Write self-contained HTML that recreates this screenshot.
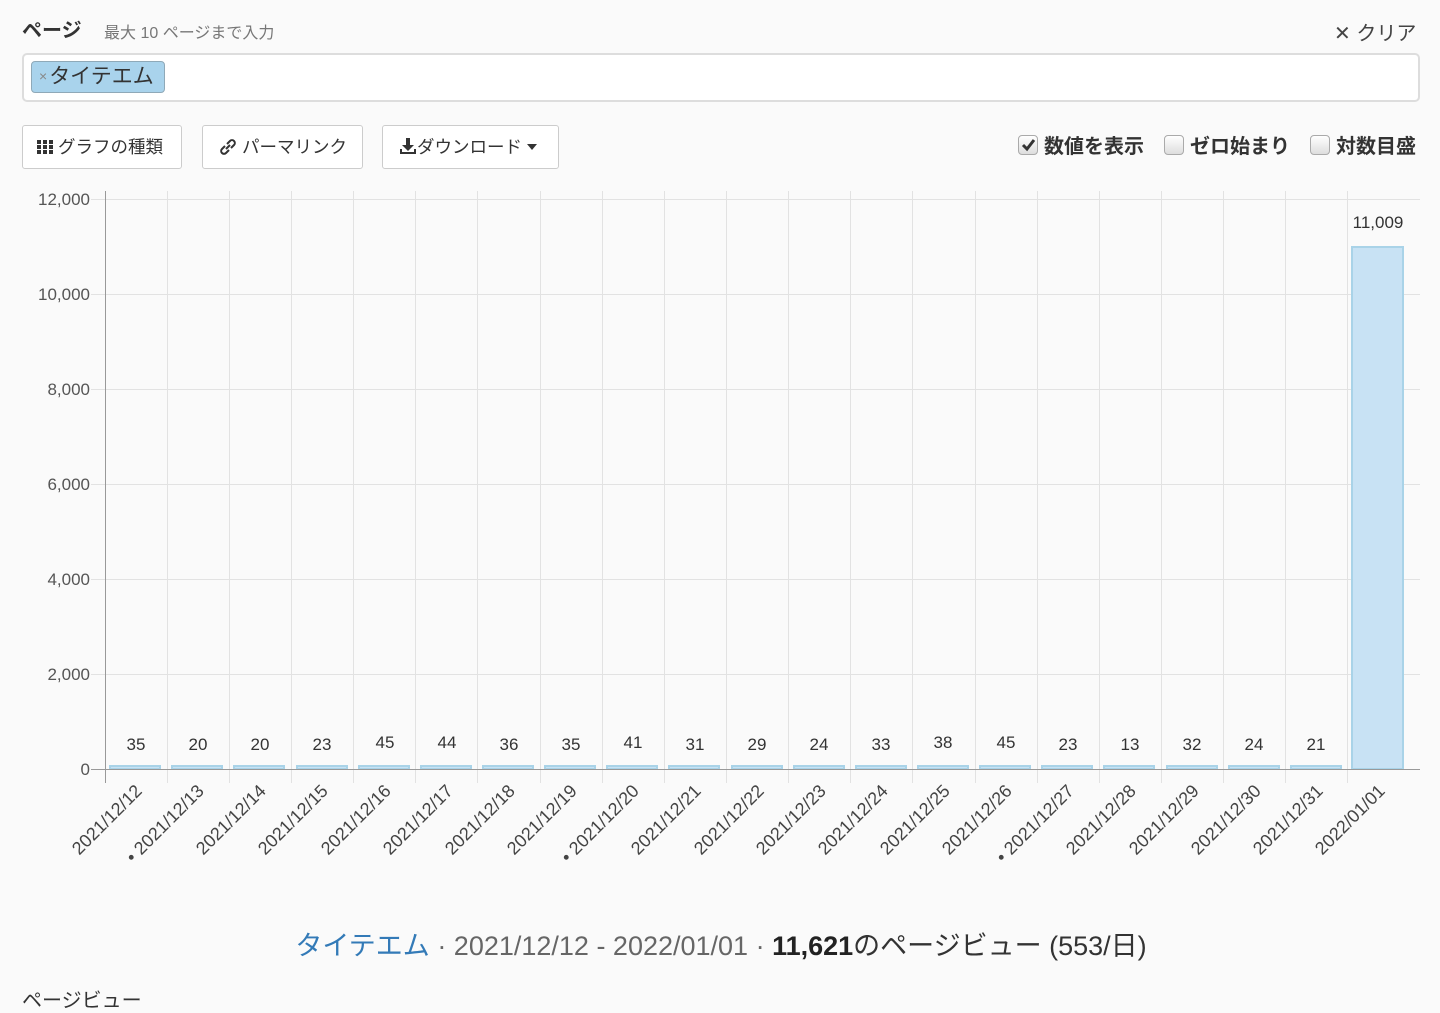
<!DOCTYPE html>
<html><head><meta charset="utf-8">
<style>
*{box-sizing:border-box;margin:0;padding:0}
body{width:1440px;height:1002px;overflow:hidden;background:#fafafa;font-family:"Liberation Sans","Noto Sans CJK JP",sans-serif;color:#333;position:relative}
.abs{position:absolute}
.btn{position:absolute;top:125px;height:44px;border:1px solid #ccc;border-radius:3px;background:#fff;font-size:17.5px;line-height:42px;padding-left:14px;color:#333;white-space:nowrap}
.cb{display:inline-block;width:20px;height:20px;border:1px solid #aaa;border-radius:4px;background:linear-gradient(#fff,#ddd);vertical-align:-2px;margin-right:6px;position:relative}
.chk{position:absolute;top:130px;font-size:20px;font-weight:bold;color:#333;white-space:nowrap}
</style></head><body>
<div class="abs" style="left:22px;top:14px;font-size:20px;font-weight:bold">ページ</div>
<div class="abs" style="left:104px;top:19px;font-size:16px;color:#777">最大 10 ページまで入力</div>
<div class="abs" style="left:1334px;top:17px;font-size:20px;color:#444">✕ クリア</div>
<div class="abs" style="left:22px;top:53px;width:1398px;height:49px;border:2px solid #ddd;border-radius:5px;background:#fff"></div>
<div class="abs" style="left:31px;top:61px;width:134px;height:32px;background:#a9d3ec;border:1px solid #8fa9b8;border-radius:4px;font-size:21px;line-height:29px;padding-left:7px;color:#333;white-space:nowrap"><span style="color:#888;font-size:14px;vertical-align:2px;margin-right:2px">×</span>タイテエム</div>

<div class="btn" style="left:22px;width:160px"><svg width="16" height="16" viewBox="0 0 16 16" style="vertical-align:-2px;margin-right:5px"><g fill="#333"><rect x="0" y="1" width="4" height="4"/><rect x="6" y="1" width="4" height="4"/><rect x="12" y="1" width="4" height="4"/><rect x="0" y="6" width="4" height="4"/><rect x="6" y="6" width="4" height="4"/><rect x="12" y="6" width="4" height="4"/><rect x="0" y="11" width="4" height="4"/><rect x="6" y="11" width="4" height="4"/><rect x="12" y="11" width="4" height="4"/></g></svg>グラフの種類</div>
<div class="btn" style="left:202px;width:161px;padding-left:16px"><svg width="18" height="18" viewBox="0 0 18 18" style="vertical-align:-3px;margin-right:5px"><g fill="none" stroke="#333" stroke-width="2"><path d="M8 6 L11 3 a2.8 2.8 0 0 1 4 4 L12 10"/><path d="M10 12 L7 15 a2.8 2.8 0 0 1 -4 -4 L6 8"/><path d="M7 11 L11 7"/></g></svg>パーマリンク</div>
<div class="btn" style="left:382px;width:177px;padding-left:16px"><svg width="18" height="18" viewBox="0 0 18 18" style="vertical-align:-2px"><g fill="#333"><rect x="7" y="1" width="4" height="7"/><path d="M3 8 H15 L9 14Z"/><path d="M1 12 H3 V15 H15 V12 H17 V17 H1Z"/></g></svg>ダウンロード <span style="display:inline-block;border-left:5px solid transparent;border-right:5px solid transparent;border-top:6px solid #333;vertical-align:3px"></span></div>

<div class="chk" style="left:1018px"><span class="cb"><svg width="18" height="18" viewBox="0 0 18 18" style="position:absolute;left:0;top:0"><path d="M4 9 L8 13 L15 4" fill="none" stroke="#333" stroke-width="3"/></svg></span>数値を表示</div>
<div class="chk" style="left:1164px"><span class="cb"></span>ゼロ始まり</div>
<div class="chk" style="left:1310px"><span class="cb"></span>対数目盛</div>

<svg class="abs" style="left:0;top:0" width="1440" height="900" font-family="Liberation Sans, Noto Sans CJK JP, sans-serif">
<g stroke="#e2e2e2" stroke-width="1">
<line x1="91" y1="199.5" x2="1420" y2="199.5"/><line x1="91" y1="294.5" x2="1420" y2="294.5"/><line x1="91" y1="389.5" x2="1420" y2="389.5"/><line x1="91" y1="484.5" x2="1420" y2="484.5"/><line x1="91" y1="579.5" x2="1420" y2="579.5"/><line x1="91" y1="674.5" x2="1420" y2="674.5"/>
<line x1="167.5" y1="191" x2="167.5" y2="783"/><line x1="229.5" y1="191" x2="229.5" y2="783"/><line x1="291.5" y1="191" x2="291.5" y2="783"/><line x1="353.5" y1="191" x2="353.5" y2="783"/><line x1="415.5" y1="191" x2="415.5" y2="783"/><line x1="477.5" y1="191" x2="477.5" y2="783"/><line x1="540.5" y1="191" x2="540.5" y2="783"/><line x1="602.5" y1="191" x2="602.5" y2="783"/><line x1="664.5" y1="191" x2="664.5" y2="783"/><line x1="726.5" y1="191" x2="726.5" y2="783"/><line x1="788.5" y1="191" x2="788.5" y2="783"/><line x1="850.5" y1="191" x2="850.5" y2="783"/><line x1="912.5" y1="191" x2="912.5" y2="783"/><line x1="975.5" y1="191" x2="975.5" y2="783"/><line x1="1037.5" y1="191" x2="1037.5" y2="783"/><line x1="1099.5" y1="191" x2="1099.5" y2="783"/><line x1="1161.5" y1="191" x2="1161.5" y2="783"/><line x1="1223.5" y1="191" x2="1223.5" y2="783"/><line x1="1285.5" y1="191" x2="1285.5" y2="783"/><line x1="1347.5" y1="191" x2="1347.5" y2="783"/>
</g>
<g fill="#555" font-size="17" text-anchor="end">
<text x="90" y="205">12,000</text><text x="90" y="300">10,000</text><text x="90" y="395">8,000</text><text x="90" y="490">6,000</text><text x="90" y="585">4,000</text><text x="90" y="680">2,000</text><text x="90" y="775">0</text>
</g>
<g fill="#c8e2f4" stroke="#a9d3e8" stroke-width="2">
<rect x="110" y="766" width="50" height="3"/><rect x="172" y="766" width="50" height="3"/><rect x="234" y="766" width="50" height="3"/><rect x="297" y="766" width="50" height="3"/><rect x="359" y="766" width="50" height="3"/><rect x="421" y="766" width="50" height="3"/><rect x="483" y="766" width="50" height="3"/><rect x="545" y="766" width="50" height="3"/><rect x="607" y="766" width="50" height="3"/><rect x="669" y="766" width="50" height="3"/><rect x="732" y="766" width="50" height="3"/><rect x="794" y="766" width="50" height="3"/><rect x="856" y="766" width="50" height="3"/><rect x="918" y="766" width="50" height="3"/><rect x="980" y="766" width="50" height="3"/><rect x="1042" y="766" width="50" height="3"/><rect x="1104" y="766" width="50" height="3"/><rect x="1167" y="766" width="50" height="3"/><rect x="1229" y="766" width="50" height="3"/><rect x="1291" y="766" width="50" height="3"/><rect x="1352" y="247" width="51" height="522"/>
</g>
<line x1="105.5" y1="191" x2="105.5" y2="783" stroke="#999"/>
<line x1="91" y1="769.5" x2="1420" y2="769.5" stroke="#999"/>
<g fill="#333" font-size="17" text-anchor="middle">
<text x="136" y="750">35</text><text x="198" y="750">20</text><text x="260" y="750">20</text><text x="322" y="750">23</text><text x="385" y="748">45</text><text x="447" y="748">44</text><text x="509" y="750">36</text><text x="571" y="750">35</text><text x="633" y="748">41</text><text x="695" y="750">31</text><text x="757" y="750">29</text><text x="819" y="750">24</text><text x="881" y="750">33</text><text x="943" y="748">38</text><text x="1006" y="748">45</text><text x="1068" y="750">23</text><text x="1130" y="750">13</text><text x="1192" y="750">32</text><text x="1254" y="750">24</text><text x="1316" y="750">21</text><text x="1378" y="228">11,009</text>
</g>
<g fill="#444" font-size="18" text-anchor="end">
<text transform="translate(143,792) rotate(-45)">2021/12/12</text>
<text transform="translate(205,792) rotate(-45)">• 2021/12/13</text>
<text transform="translate(267,792) rotate(-45)">2021/12/14</text>
<text transform="translate(329,792) rotate(-45)">2021/12/15</text>
<text transform="translate(392,792) rotate(-45)">2021/12/16</text>
<text transform="translate(454,792) rotate(-45)">2021/12/17</text>
<text transform="translate(516,792) rotate(-45)">2021/12/18</text>
<text transform="translate(578,792) rotate(-45)">2021/12/19</text>
<text transform="translate(640,792) rotate(-45)">• 2021/12/20</text>
<text transform="translate(702,792) rotate(-45)">2021/12/21</text>
<text transform="translate(765,792) rotate(-45)">2021/12/22</text>
<text transform="translate(827,792) rotate(-45)">2021/12/23</text>
<text transform="translate(889,792) rotate(-45)">2021/12/24</text>
<text transform="translate(951,792) rotate(-45)">2021/12/25</text>
<text transform="translate(1013,792) rotate(-45)">2021/12/26</text>
<text transform="translate(1075,792) rotate(-45)">• 2021/12/27</text>
<text transform="translate(1137,792) rotate(-45)">2021/12/28</text>
<text transform="translate(1200,792) rotate(-45)">2021/12/29</text>
<text transform="translate(1262,792) rotate(-45)">2021/12/30</text>
<text transform="translate(1324,792) rotate(-45)">2021/12/31</text>
<text transform="translate(1386,792) rotate(-45)">2022/01/01</text>
</g>
</svg>

<div class="abs" style="left:0;width:1442px;top:924px;text-align:center;font-size:27px;color:#666;white-space:nowrap"><span style="color:#337ab7">タイテエム</span> · 2021/12/12 - 2022/01/01 · <span style="color:#222;font-weight:bold">11,621</span><span style="color:#333">のページビュー (553/日)</span></div>
<div class="abs" style="left:22px;top:984px;font-size:20px;color:#333">ページビュー</div>
</body></html>
